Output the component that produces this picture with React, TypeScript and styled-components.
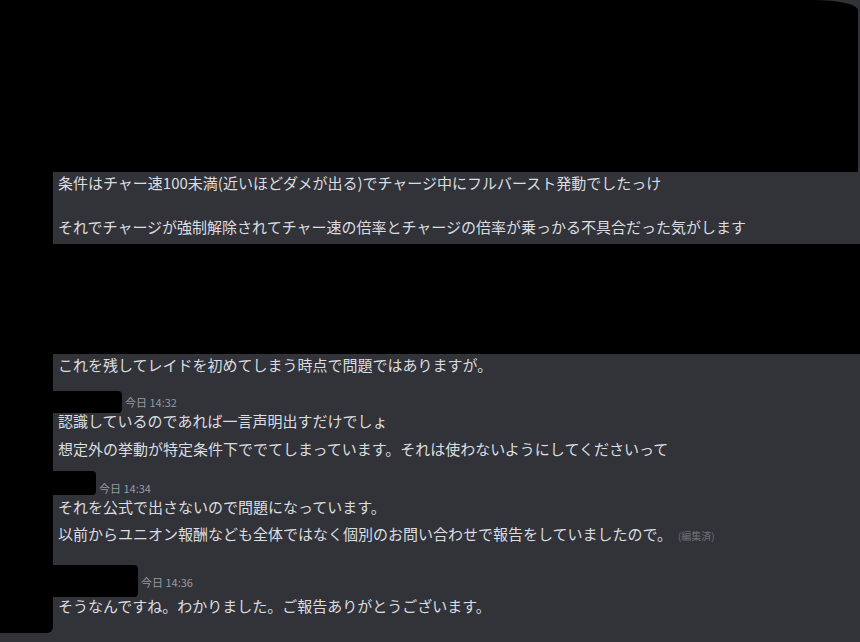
import * as React from 'react';
import styled, { createGlobalStyle } from 'styled-components';

const GlobalStyle = createGlobalStyle`
	html,
	body {
		margin: 0;
		padding: 0;
		background-color: #313338;
	}
`;

const Page = styled.div`
	width: 860px;
	height: 642px;
	overflow: hidden;
	display: flex;
	flex-direction: column;
	background-color: #313338;
	font-family: 'Noto Sans CJK JP', 'Noto Sans', sans-serif;
	color: #dcdde0;
`;

// redacted areas of the screenshot
const TopMask = styled.div`
	height: 172px;
	margin-right: 2px;
	background-color: #000;
	border-top-right-radius: 44px 10px;
	flex-shrink: 0;
`;

const Body = styled.div`
	display: flex;
	align-items: flex-start;
	flex: 1;
`;

const SideMask = styled.div`
	width: 53px;
	height: 461px;
	background-color: #000;
	border-bottom-right-radius: 6px;
	flex-shrink: 0;
`;

const Feed = styled.div`
	flex: 1;
	display: flex;
	flex-direction: column;
`;

const MidMask = styled.div`
	height: 110px;
	background-color: #000;
`;

const Paragraph = styled.div`
	padding: 0 0 6px 5px;
	font-size: 15px;
	line-height: 22px;
	white-space: pre-wrap;
`;

const Line = styled.div<{ $gap?: number }>`
	margin-top: ${p => p.$gap ?? 0}px;
	padding-left: 5px;
	font-size: 15px;
	line-height: 22px;
	white-space: nowrap;
`;

const Header = styled.div<{ $top: number; $height: number }>`
	display: flex;
	align-items: flex-start;
	margin-top: ${p => p.$top}px;
	height: ${p => p.$height}px;
`;

const NameMask = styled.div<{ $w: number; $h: number }>`
	width: ${p => p.$w}px;
	height: ${p => p.$h}px;
	background-color: #000;
	border-radius: 0 4px 4px 0;
	flex-shrink: 0;
`;

const Time = styled.span<{ $offset: number }>`
	margin: ${p => p.$offset}px 0 0 3px;
	font-size: 11px;
	line-height: 12px;
	color: #949ba4;
`;

const Edited = styled.span`
	margin-left: 6px;
	font-size: 10px;
	color: #6d6f78;
`;

const App: React.FC = () => {
	return (
		<Page>
			<GlobalStyle />
			<TopMask />
			<Body>
				<SideMask />
				<Feed>
					<Paragraph>
						{'条件はチャー速100未満(近いほどダメが出る)でチャージ中にフルバースト発動でしたっけ\n\nそれでチャージが強制解除されてチャー速の倍率とチャージの倍率が乗っかる不具合だった気がします'}
					</Paragraph>
					<MidMask />
					<Line>これを残してレイドを初めてしまう時点で問題ではありますが。</Line>

					<Header $top={15} $height={19}>
						<NameMask $w={69} $h={22} />
						<Time $offset={5}>今日 14:32</Time>
					</Header>
					<Line>認識しているのであれば一言声明出すだけでしょ</Line>
					<Line $gap={6}>想定外の挙動が特定条件下ででてしまっています。それは使わないようにしてくださいって</Line>

					<Header $top={11} $height={25}>
						<NameMask $w={43} $h={24} />
						<Time $offset={11}>今日 14:34</Time>
					</Header>
					<Line>それを公式で出さないので問題になっています。</Line>
					<Line $gap={5}>
						以前からユニオン報酬なども全体ではなく個別のお問い合わせで報告をしていましたので。
						<Edited>(編集済)</Edited>
					</Line>

					<Header $top={18} $height={30}>
						<NameMask $w={85} $h={32} />
						<Time $offset={11}>今日 14:36</Time>
					</Header>
					<Line>そうなんですね。わかりました。ご報告ありがとうございます。</Line>
				</Feed>
			</Body>
		</Page>
	);
};

export default App;
